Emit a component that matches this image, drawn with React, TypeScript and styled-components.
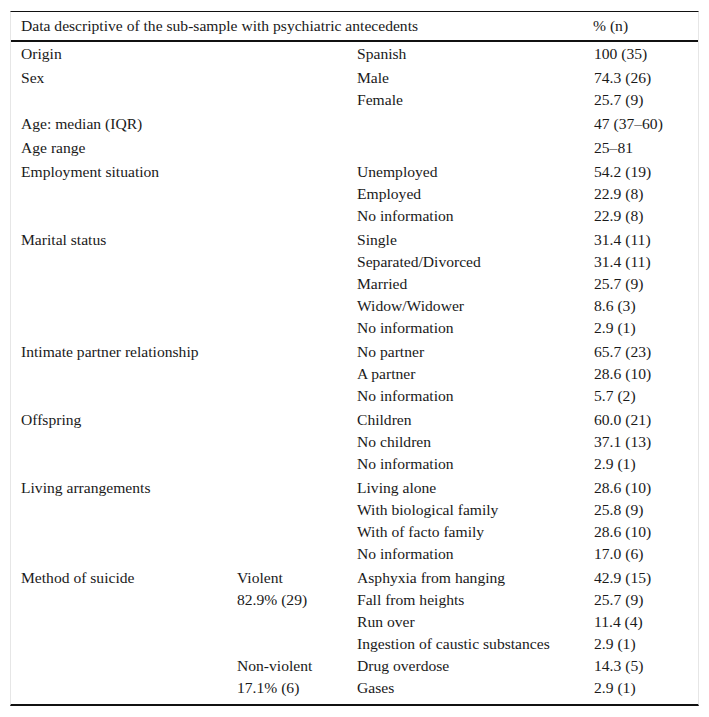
import React from "react";
import styled, { createGlobalStyle } from "styled-components";

const Global = createGlobalStyle`
  html, body { margin: 0; padding: 0; background: #ffffff; }
  body { font-family: "Liberation Serif", "Times New Roman", serif; color: #1a1a1a; }
`;

const Page = styled.div`
  padding: 11px 10px 0 10px;
  width: 689px;
`;

const Table = styled.div`
  font-family: "Liberation Serif", "Times New Roman", serif;
  border-left: 1px solid #e6e6e6;
  border-right: 1px solid #e6e6e6;
  border-top: 1px solid #111;
  border-bottom: 2px solid #111;
  padding-bottom: 4px;
  font-size: 15.6px;
`;

const HeaderRow = styled.div`
  display: grid;
  grid-template-columns: 572px 1fr;
  height: 28px;
  align-items: center;
  border-bottom: 2px solid #111;
  padding-left: 10px;
  line-height: 22px;
`;

const Group = styled.div`
  display: grid;
  grid-template-columns: 216px 120px 237px 1fr;
  padding: 1px 0 1px 10px;
`;

const Col = styled.div`
  display: flex;
  flex-direction: column;
`;

const Line = styled.div`
  height: 22px;
  line-height: 22px;
  white-space: nowrap;
`;

type G = { label: string; sub?: string[]; items: string[]; values: string[] };

const groups: G[] = [
  { label: "Origin", items: ["Spanish"], values: ["100 (35)"] },
  { label: "Sex", items: ["Male", "Female"], values: ["74.3 (26)", "25.7 (9)"] },
  { label: "Age: median (IQR)", items: [""], values: ["47 (37–60)"] },
  { label: "Age range", items: [""], values: ["25–81"] },
  {
    label: "Employment situation",
    items: ["Unemployed", "Employed", "No information"],
    values: ["54.2 (19)", "22.9 (8)", "22.9 (8)"],
  },
  {
    label: "Marital status",
    items: ["Single", "Separated/Divorced", "Married", "Widow/Widower", "No information"],
    values: ["31.4 (11)", "31.4 (11)", "25.7 (9)", "8.6 (3)", "2.9 (1)"],
  },
  {
    label: "Intimate partner relationship",
    items: ["No partner", "A partner", "No information"],
    values: ["65.7 (23)", "28.6 (10)", "5.7 (2)"],
  },
  {
    label: "Offspring",
    items: ["Children", "No children", "No information"],
    values: ["60.0 (21)", "37.1 (13)", "2.9 (1)"],
  },
  {
    label: "Living arrangements",
    items: ["Living alone", "With biological family", "With of facto family", "No information"],
    values: ["28.6 (10)", "25.8 (9)", "28.6 (10)", "17.0 (6)"],
  },
  {
    label: "Method of suicide",
    sub: ["Violent", "82.9% (29)", "", "", "Non-violent", "17.1% (6)"],
    items: [
      "Asphyxia from hanging",
      "Fall from heights",
      "Run over",
      "Ingestion of caustic substances",
      "Drug overdose",
      "Gases",
    ],
    values: ["42.9 (15)", "25.7 (9)", "11.4 (4)", "2.9 (1)", "14.3 (5)", "2.9 (1)"],
  },
];

export default function App() {
  return (
    <Page>
      <Global />
      <Table>
        <HeaderRow>
          <div>Data descriptive of the sub-sample with psychiatric antecedents</div>
          <div>% (n)</div>
        </HeaderRow>
        {groups.map((g) => (
          <Group key={g.label}>
            <Col>
              <Line>{g.label}</Line>
            </Col>
            <Col>
              {(g.sub ?? []).map((s, i) => (
                <Line key={i}>{s}</Line>
              ))}
            </Col>
            <Col>
              {g.items.map((s, i) => (
                <Line key={i}>{s}</Line>
              ))}
            </Col>
            <Col>
              {g.values.map((s, i) => (
                <Line key={i}>{s}</Line>
              ))}
            </Col>
          </Group>
        ))}
      </Table>
    </Page>
  );
}
